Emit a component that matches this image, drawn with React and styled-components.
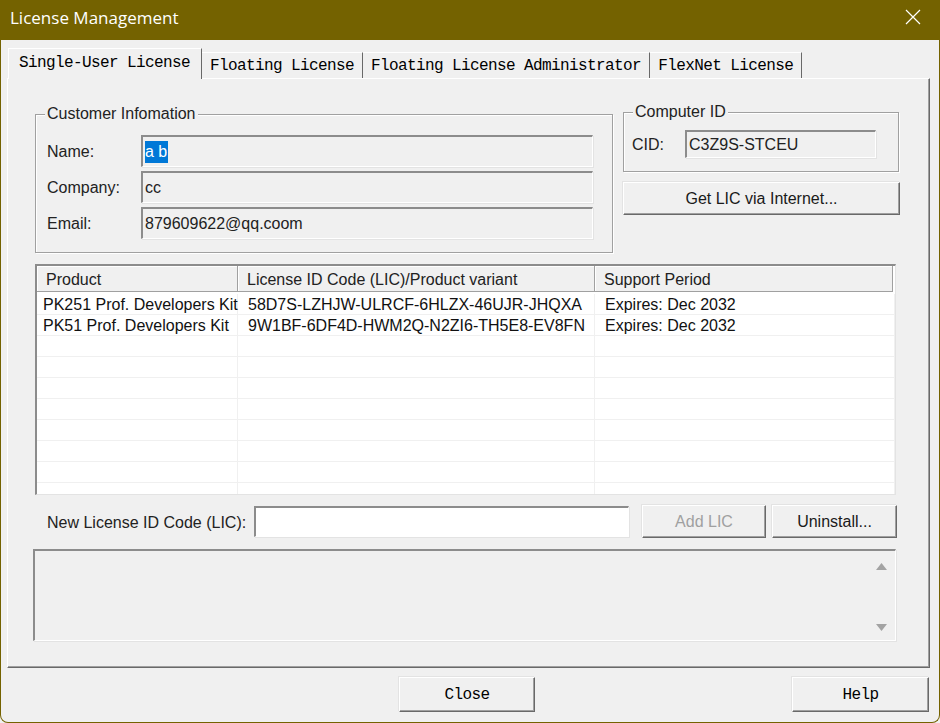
import React from "react";
import styled, { createGlobalStyle } from "styled-components";

const OLIVE = "#746200";

const GlobalStyle = createGlobalStyle`
  html, body {
    margin: 0;
    padding: 0;
    background: #f0f0f0;
  }
  body {
    font-family: "Liberation Sans", Arial, sans-serif;
    font-size: 16px;
    color: #000;
  }
  * {
    box-sizing: border-box;
  }
`;

const Window = styled.div`
  width: 940px;
  height: 723px;
  display: flex;
  flex-direction: column;
  background: #f0f0f0;
  border: 1px solid ${OLIVE};
  border-top: none;
  border-radius: 0 0 8px 8px;
  overflow: hidden;
`;

const TitleBar = styled.div`
  height: 40px;
  flex: none;
  background: ${OLIVE};
  color: #fff;
  display: flex;
  align-items: center;
  justify-content: space-between;
  padding: 0 18px 6px 9px;
  font-family: "Open Sans", "Liberation Sans", sans-serif;
  font-size: 17px;
`;

const Body = styled.div`
  flex: 1;
  display: flex;
  flex-direction: column;
  padding: 8px 0 0 6px;
`;

const TabStrip = styled.div`
  display: flex;
  align-items: flex-end;
  height: 30px;
  margin-left: 1px;
  font-family: "Liberation Mono", "DejaVu Sans Mono", monospace;
  font-size: 16px;
  letter-spacing: -0.6px;
`;

const Tab = styled.div`
  position: relative;
  display: flex;
  align-items: center;
  background: #f0f0f0;
  border-top: 1px solid #fff;
  border-right: 1px solid #696969;
  height: ${(p) => (p.$active ? "31px" : "26px")};
  padding: ${(p) => (p.$active ? "0 11px 2px 10px" : "0 8px")};
  ${(p) =>
    p.$active &&
    `
    border-left: 1px solid #fff;
    margin-bottom: -1px;
    z-index: 1;
  `}
`;

const Panel = styled.div`
  width: 923px;
  height: 590px;
  border-top: 1px solid #fff;
  border-left: 1px solid #fff;
  border-right: 1px solid #696969;
  border-bottom: 1px solid #696969;
  box-shadow: inset -1px -1px 0 #a0a0a0;
  padding: 35px 0 0 27px;
  display: flex;
  flex-direction: column;
`;

const TopRow = styled.div`
  display: flex;
  align-items: flex-start;
  gap: 10px;
`;

const Group = styled.div`
  position: relative;
  width: ${(p) => p.$w}px;
  height: ${(p) => p.$h}px;
  border: 1px solid #a0a0a0;
  box-shadow: inset 1px 1px 0 #fff, 1px 1px 0 #fff;
  padding: ${(p) => p.$pad};
`;

const Legend = styled.span`
  position: absolute;
  top: -10px;
  left: 9px;
  padding: 0 2px;
  background: #f0f0f0;
  line-height: 18px;
  color: #222;
`;

const FieldGrid = styled.div`
  display: grid;
  grid-template-columns: ${(p) => p.$cols};
  row-gap: 4px;
  align-items: center;
`;

const Label = styled.div`
  color: #222;
  padding-top: 2px;
`;

const Field = styled.div`
  height: ${(p) => p.$h || 32}px;
  display: flex;
  align-items: center;
  padding-left: 2px;
  background: ${(p) => (p.$white ? "#fff" : "#f0f0f0")};
  border-top: 2px solid #8c8c8c;
  border-left: 2px solid #8c8c8c;
  border-right: 1px solid #fff;
  border-bottom: 1px solid #fff;
  box-shadow: 1px 1px 0 #e3e3e3;
  white-space: nowrap;
  color: #222;
`;

const Selected = styled.span`
  background: #0078d7;
  color: #fff;
  padding: 2px 1px 2px 0;
`;

const RightCol = styled.div`
  display: flex;
  flex-direction: column;
  gap: 10px;
  margin-top: -2px;
`;

const Button = styled.div`
  width: ${(p) => p.$w}px;
  height: ${(p) => p.$h || 33}px;
  display: flex;
  align-items: center;
  justify-content: center;
  background: #f0f0f0;
  color: ${(p) => (p.$disabled ? "#a0a0a0" : "#1a1a1a")};
  border-top: 1px solid #fff;
  border-left: 1px solid #fff;
  border-right: 1px solid #696969;
  border-bottom: 1px solid #696969;
  box-shadow: inset -1px -1px 0 #a0a0a0, -1px -1px 0 #e3e3e3;
  ${(p) =>
    p.$mono &&
    `
    font-family: "Liberation Mono", "DejaVu Sans Mono", monospace;
    font-size: 16px;
    letter-spacing: -0.6px;
    color: #000;
  `}
`;

const ListView = styled.div`
  width: 861px;
  height: 231px;
  margin-top: 11px;
  background: #fff;
  border-top: 2px solid #8c8c8c;
  border-left: 2px solid #8c8c8c;
  border-right: 1px solid #e3e3e3;
  border-bottom: 1px solid #e3e3e3;
  overflow: hidden;
`;

const Row = styled.div`
  display: grid;
  grid-template-columns: 201px 357px 1fr;
`;

const HeadCell = styled.div`
  height: 26px;
  display: flex;
  align-items: center;
  padding: 2px 0 0 9px;
  background: #f0f0f0;
  border-right: 1px solid #a0a0a0;
  border-bottom: 1px solid #a0a0a0;
  box-shadow: inset 1px 1px 0 #fff;
  color: #222;
  &:last-child {
    margin-right: 2px;
  }
`;

const ListBody = styled.div`
  padding-top: 2px;
`;

const Cell = styled.div`
  height: 21px;
  display: flex;
  align-items: center;
  padding: 2px 0 0 10px;
  border-right: 1px solid #f0f0f0;
  border-bottom: 1px solid #f0f0f0;
  white-space: nowrap;
  color: #111;
  &:first-child {
    padding-left: 6px;
  }
`;

const LicRow = styled.div`
  display: flex;
  align-items: center;
  margin-top: 10px;
`;

const LicLabel = styled.div`
  width: 219px;
  padding: 2px 0 0 12px;
  color: #222;
`;

const LicButtons = styled.div`
  display: flex;
  gap: 6px;
  margin-left: 13px;
`;

const Output = styled.div`
  width: 863px;
  height: 92px;
  margin: 11px 0 0 -2px;
  background: #f0f0f0;
  border-top: 2px solid #8c8c8c;
  border-left: 2px solid #8c8c8c;
  border-right: 1px solid #fff;
  border-bottom: 1px solid #fff;
  box-shadow: 1px 1px 0 #e3e3e3;
  display: flex;
  justify-content: flex-end;
`;

const ScrollArrows = styled.div`
  width: 28px;
  display: flex;
  flex-direction: column;
  justify-content: space-between;
  align-items: center;
  padding: 12px 0 9px;
`;

const Footer = styled.div`
  display: flex;
  gap: 257px;
  margin-top: 9px;
  padding-left: 392px;
`;

const Arrow = ({ down }) => (
  <svg width="11" height="7" viewBox="0 0 11 7">
    <polygon
      points={down ? "0,0 11,0 5.5,7" : "0,7 11,7 5.5,0"}
      fill="#a3a3a3"
    />
  </svg>
);

const rows = [
  ["PK251 Prof. Developers Kit", "58D7S-LZHJW-ULRCF-6HLZX-46UJR-JHQXA", "Expires: Dec 2032"],
  ["PK51 Prof. Developers Kit", "9W1BF-6DF4D-HWM2Q-N2ZI6-TH5E8-EV8FN", "Expires: Dec 2032"],
];

const emptyRows = Array.from({ length: 8 }, () => ["", "", ""]);

export default function App() {
  return (
    <>
      <GlobalStyle />
      <Window>
        <TitleBar>
          <span>License Management</span>
          <svg width="16" height="16" viewBox="0 0 16 16">
            <path d="M1 1 L15 15 M15 1 L1 15" stroke="#fff" strokeWidth="1.2" />
          </svg>
        </TitleBar>
        <Body>
          <TabStrip>
            <Tab $active>Single-User License</Tab>
            <Tab>Floating License</Tab>
            <Tab>Floating License Administrator</Tab>
            <Tab>FlexNet License</Tab>
          </TabStrip>
          <Panel>
            <TopRow>
              <Group $w={578} $h={139} $pad="20px 18px 0 11px">
                <Legend>Customer Infomation</Legend>
                <FieldGrid $cols="94px 452px">
                  <Label>Name:</Label>
                  <Field>
                    <Selected>a b</Selected>
                  </Field>
                  <Label>Company:</Label>
                  <Field>cc</Field>
                  <Label>Email:</Label>
                  <Field>879609622@qq.coom</Field>
                </FieldGrid>
              </Group>
              <RightCol>
                <Group $w={276} $h={60} $pad="17px 0 0 8px">
                  <Legend>Computer ID</Legend>
                  <FieldGrid $cols="53px 191px">
                    <Label>CID:</Label>
                    <Field $h={28}>C3Z9S-STCEU</Field>
                  </FieldGrid>
                </Group>
                <Button $w={277}>Get LIC via Internet...</Button>
              </RightCol>
            </TopRow>
            <ListView>
              <Row>
                <HeadCell>Product</HeadCell>
                <HeadCell>License ID Code (LIC)/Product variant</HeadCell>
                <HeadCell>Support Period</HeadCell>
              </Row>
              <ListBody>
                {[...rows, ...emptyRows].map((r, i) => (
                  <Row key={i}>
                    {r.map((c, j) => (
                      <Cell key={j}>{c}</Cell>
                    ))}
                  </Row>
                ))}
              </ListBody>
            </ListView>
            <LicRow>
              <LicLabel>New License ID Code (LIC):</LicLabel>
              <Field $white $h={31} style={{ width: 375 }} />
              <LicButtons>
                <Button $w={124} $disabled>
                  Add LIC
                </Button>
                <Button $w={125}>Uninstall...</Button>
              </LicButtons>
            </LicRow>
            <Output>
              <ScrollArrows>
                <Arrow />
                <Arrow down />
              </ScrollArrows>
            </Output>
          </Panel>
          <Footer>
            <Button $w={136} $h={35} $mono>
              Close
            </Button>
            <Button $w={137} $h={35} $mono>
              Help
            </Button>
          </Footer>
        </Body>
      </Window>
    </>
  );
}
